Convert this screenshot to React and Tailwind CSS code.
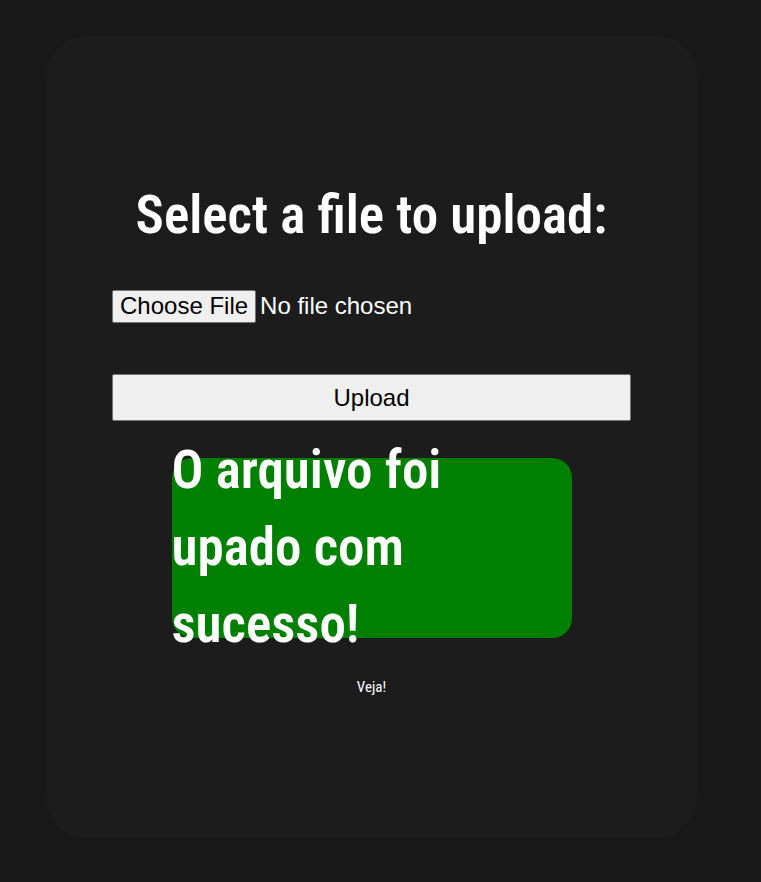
import React from 'react';

const App = () => {
  return (
    <div className="min-h-[882px] bg-[#191919] pt-[36px] px-[46px]">
      <div
        className="w-[651px] h-[802px] rounded-[40px] bg-[#1c1c1c] px-[66px] pt-[147px] flex flex-col"
        style={{ fontFamily: '"Roboto Condensed", "Liberation Sans", sans-serif' }}
      >
        <h1 className="text-center text-white font-semibold text-[53px] leading-[64px]">
          Select a file to upload:
        </h1>

        {/* file picker */}
        <div
          className="mt-[41px] flex items-center text-[24px] text-white"
          style={{ fontFamily: '"Liberation Sans", Arial, sans-serif' }}
        >
          <button className="h-[33px] px-[7px] bg-[#efefef] text-black border border-[#767676] rounded-[2px] leading-none">
            Choose File
          </button>
          <span className="ml-[4px]">No file chosen</span>
        </div>

        <button
          className="mt-[50px] h-[47px] w-full bg-[#efefef] text-black border border-[#767676] rounded-[2px] text-[24px]"
          style={{ fontFamily: '"Liberation Sans", Arial, sans-serif' }}
        >
          Upload
        </button>

        {/* success message */}
        <div className="mt-[37px] mx-auto w-[400px] h-[180px] shrink-0 rounded-[20px] bg-[#008000]">
          <h2 className="w-[300px] -mt-[26px] text-white font-semibold text-[53px] leading-[77px]">
            O arquivo foi upado com sucesso!
          </h2>
        </div>

        <p className="mt-[39px] text-center text-white font-normal text-[15px] leading-[20px]">Veja!</p>
      </div>
    </div>
  );
};

export default App;
